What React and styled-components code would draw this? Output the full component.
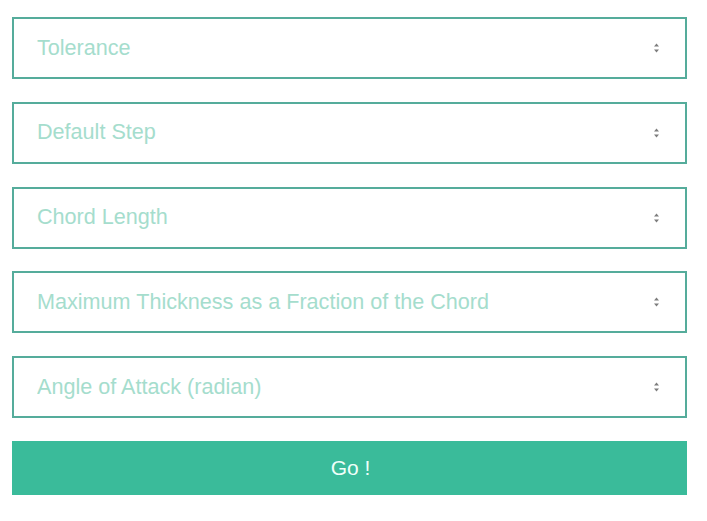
import styled, {createGlobalStyle} from "styled-components";

const GlobalStyle = createGlobalStyle`
  body {
    margin: 0;
    background: #ffffff;
    font-family: "Liberation Sans", Arial, sans-serif;
  }
`;

const Form = styled.form`
  width: 675px;
  padding: 17px 0 0 12px;
  display: flex;
  flex-direction: column;
  gap: 22.8px;
`;

const Field = styled.label`
  display: flex;
  align-items: center;
  height: 62px;
  box-sizing: border-box;
  border: 2px solid #55ac9b;
  background: #ffffff;
  padding: 0 25px 0 23px;
`;

const Input = styled.input`
  flex: 1;
  border: none;
  outline: none;
  background: transparent;
  font-family: "Liberation Sans", Arial, sans-serif;
  font-size: 21.6px;
  color: #333;
  padding: 0;
  margin-top: -1px;

  &::placeholder {
    color: #a5ddcd;
  }
`;

const Spinner = styled.svg`
  width: 7px;
  height: 12px;
  flex-shrink: 0;
`;

const GoButton = styled.button`
  height: 54px;
  border: none;
  background: #3abb9a;
  color: #effff9;
  font-family: "Liberation Sans", Arial, sans-serif;
  font-size: 21px;
  cursor: pointer;
  padding: 0 0 0 2px;
`;

const fields = [
    "Tolerance",
    "Default Step",
    "Chord Length",
    "Maximum Thickness as a Fraction of the Chord",
    "Angle of Attack (radian)",
];

export default function App() {
    return (
        <>
            <GlobalStyle/>
            <Form onSubmit={e => e.preventDefault()}>
                {fields.map(name => (
                    <Field key={name}>
                        <Input type="text" placeholder={name}/>
                        <Spinner viewBox="0 0 7 12">
                            <path d="M3.5 1.5 L6 4.5 L1 4.5 Z" fill="#7d7d7d"/>
                            <path d="M3.5 10.5 L6 7.5 L1 7.5 Z" fill="#7d7d7d"/>
                        </Spinner>
                    </Field>
                ))}
                <GoButton type="submit">Go !</GoButton>
            </Form>
        </>
    );
}
